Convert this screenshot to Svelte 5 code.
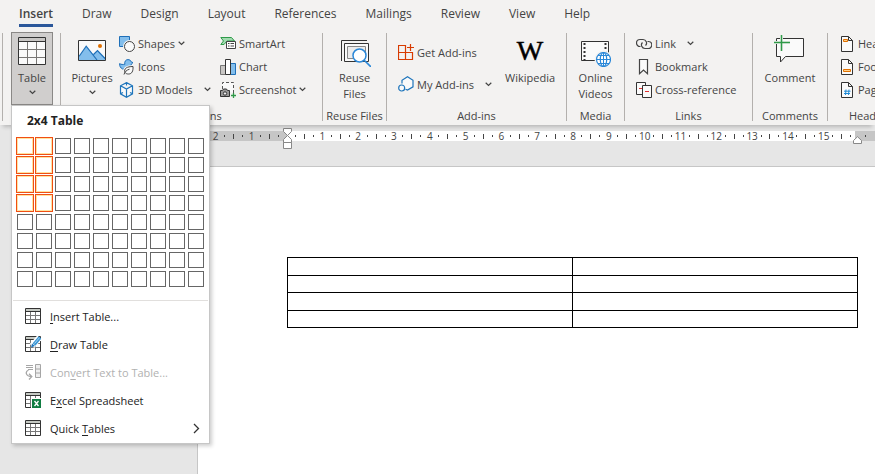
<script lang="ts">
  const tabs = ['Insert', 'Draw', 'Design', 'Layout', 'References', 'Mailings', 'Review', 'View', 'Help'];
  let activeTab = $state('Insert');

  const rows = 8;
  const cols = 10;
  let pickedCols = $state(2);
  let pickedRows = $state(4);

  const cells = Array.from({ length: rows * cols }, (_, i) => ({
    row: Math.floor(i / cols) + 1,
    col: (i % cols) + 1
  }));

  // each entry is split around its access key
  const menu = [
    { icon: 'grid', before: '', key: 'I', after: 'nsert Table...' },
    { icon: 'draw', before: '', key: 'D', after: 'raw Table' },
    { icon: 'convert', before: 'Con', key: 'v', after: 'ert Text to Table...', disabled: true },
    { icon: 'excel', before: 'E', key: 'x', after: 'cel Spreadsheet' },
    { icon: 'grid', before: 'Quick ', key: 'T', after: 'ables', submenu: true }
  ];

  // four ruler marks to a centimetre
  function mark(n: number) {
    if (n % 4 === 0) return String(n / 4);
    return n % 2 === 0 ? 'tick' : 'dot';
  }

  const leftMarks = [8, 7, 6, 5, 4, 3, 2, 1].map(mark);
  const mainMarks = Array.from({ length: 63 }, (_, i) => mark(i + 1));

  function pick(row: number, col: number) {
    pickedRows = row;
    pickedCols = col;
  }
</script>

{#snippet chevron()}
  <svg class="chevron" width="7" height="5" viewBox="0 0 7 5"><path d="M.7.8 3.5 3.5 6.3.8" fill="none" stroke="#444" stroke-width="1.2" /></svg>
{/snippet}

{#snippet small(icon: string, text: string, arrow: string)}
  <button class="small">
    <svg width="16" height="16" viewBox="0 0 16 16" fill="none" stroke="#444">
      {#if icon === 'shapes'}
        <path d="M.5.5h10v10H.5z" fill="#83beec" stroke="#1e6fb8" />
        <circle cx="10.5" cy="10.5" r="5" fill="#fafafa" stroke="#f3f2f1" stroke-width="3" />
        <circle cx="10.5" cy="10.5" r="5" fill="#fafafa" />
      {:else if icon === 'icons'}
        <path d="M.6 4.6c1.5 1 3.4 1 5.2.7C5.3 2.4 6.8.6 9 .6c1.8 0 2.9 1 3.2 2.3l1.8.7-1.6 1.4c-.4 2.2-2 3.5-4 5L3.5 10C1.5 9 .4 7 .6 4.6z" fill="#83beec" stroke="#1e6fb8" />
        <path d="M6 13.5c-1.5-4 2-6 8-6 .3 4.500-1 7.500-4.500 7.500-1.600 0-2.800-.5-3.500-1.500z" fill="#fafafa" stroke="#f3f2f1" stroke-width="3" />
        <path d="M5 15.500c.7-2.500 2.500-4.500 5.500-5.300M6 13.500c-1.500-4 2-6 8-6 .3 4.500-1 7.500-4.500 7.500-1.600 0-2.800-.5-3.500-1.500z" fill="#fafafa" />
      {:else if icon === 'cube'}
        <path d="M7.500.6 13.500 3.800v8L7.500 15.300 1.500 11.800v-8z M1.500 3.800l6 3.200 6-3.200M7.500 7v8M7.500.6v3M1.500 11.800l2.500-1.400M13.500 11.800 11 10.400" fill="#fafafa" stroke="#1e75bb" stroke-width="1.2" />
      {:else if icon === 'smartart'}
        <path d="M.8 1.500h10.700L14.500 5H7L4 8.500H.8L3.500 5z" fill="#a1dbb0" stroke="#2f9a49" />
        <path d="M6.500 5.500h9v7h-9z" fill="#fff" stroke="#444" />
        <path d="M8 7.500h1.500M10.500 7.500H14M8 10h1.500M10.500 10H14" />
      {:else if icon === 'chart'}
        <path d="M.5 6.500h5v9h-5z" fill="#c8c6c4" stroke="#777" />
        <path d="M10.500 4.500h5v11h-5z" fill="#83beec" stroke="#1e6fb8" />
        <path d="M5.500.5h5v15h-5z" fill="#fff" stroke="#333" />
      {:else if icon === 'screenshot'}
        <path d="M2.500 7V.5h11V11" fill="#fafafa" stroke="#555" stroke-dasharray="3 2" />
        <path d="M.5 8.500h2l1-1.500h3l1 1.500h2v6h-9z" fill="#999" stroke="#333" />
        <circle cx="5" cy="11.500" r="1.700" fill="#eee" stroke="#333" />
        <path d="M13.500 11v5M11 13.500h5" stroke="#2f9a49" stroke-width="1.300" />
      {:else if icon === 'get'}
        <path d="M.5 1.500h7v14h-7zM.5 8.500h14v7h-14zM12.500 0v7M9 3.500h7" stroke="#d83b01" stroke-width="1.200" />
      {:else if icon === 'my'}
        <path d="M4 7.500V4.300L9.500.8l5.500 3.500v6.500L9.500 14l-2-.7" fill="#fafafa" stroke="#1e75bb" stroke-width="1.200" />
        <circle cx="3.700" cy="12" r="3" fill="#fafafa" stroke="#1e75bb" stroke-width="1.200" />
      {:else if icon === 'link'}
        <path d="M4.500 10.500H4A3.500 3.500 0 1 1 4 3.500h3a3.500 3.500 0 0 1 2.500 6M11.500 5.500h.8a3.500 3.500 0 1 1 0 7H9A3.500 3.500 0 0 1 6.500 6.500" stroke-width="1.200" />
      {:else if icon === 'bookmark'}
        <path d="M3.500.5h8v14.200l-4-3.700-4 3.700z" fill="#fafafa" stroke-width="1.200" />
      {:else if icon === 'cross'}
        <path d="M.5.5h9v12h-9z" fill="#fafafa" stroke="#333" />
        <path d="M3 6.500h3" stroke="#e03030" />
        <path d="M6.500 3.500h9v12h-9z" fill="#fafafa" stroke="#333" />
        <path d="M9 9.500h4" stroke="#e03030" />
      {:else}
        <path d="M2.500.5h7l4 4v11h-11zM9.500.5v4h4" fill="#fafafa" stroke="#333" />
        {#if icon === 'header'}
          <path d="M4.500 3.500h4v2h-4z" fill="#ffd08a" stroke="#e07000" />
        {:else if icon === 'footer'}
          <path d="M4.500 10.500h7v2h-7z" fill="#ffd08a" stroke="#e07000" />
        {:else}
          <path d="M7 7.500 6.500 13M10 7.500 9.500 13M5 9.200h6.500M5 11.500h6" stroke="#1e8ad6" />
        {/if}
      {/if}
    </svg>
    <span>{text}</span>
    {#if arrow}
      <span class="arrow" class:split={arrow === 'split'}>{@render chevron()}</span>
    {/if}
  </button>
{/snippet}

<div class="app">
  <div class="tabs" role="tablist">
    {#each tabs as tab}
      <button role="tab" class:active={tab === activeTab} aria-selected={tab === activeTab} onclick={() => (activeTab = tab)}>{tab}</button>
    {/each}
  </div>

  <div class="ribbon">
    <section class="group edge"></section>

    <section class="group tables">
      <button class="big pressed">
        <svg width="32" height="32" viewBox="0 0 32 32" fill="none">
          <path d="M2.500 2.500h27v27h-27z" fill="#fafafa" />
          <path d="M3 3h26v3H3z" fill="#c8c6c4" />
          <path d="M11.500 7v22M20.500 7v22M3 14.500h26M3 22.500h26" stroke="#797775" />
          <path d="M2.500 2.500h27v27h-27zM3 6.500h26" stroke="#333" />
        </svg>
        <span>Table</span>
        <span>{@render chevron()}</span>
      </button>

      <div class="dropdown">
        <h2>{pickedCols}x{pickedRows} Table</h2>
        <div class="picker">
          {#each cells as cell}
            <button
              class="cell"
              class:picked={cell.row <= pickedRows && cell.col <= pickedCols}
              aria-label="{cell.col}x{cell.row} Table"
              onclick={() => pick(cell.row, cell.col)}
            ></button>
          {/each}
        </div>
        <ul>
          {#each menu as item}
            <li>
              <button disabled={item.disabled}>
                <svg width="16" height="16" viewBox="0 0 16 16" fill="none">
                  {#if item.icon === 'convert'}
                    <path d="M1 1.500h7M1 3.500h7M3 5.500h5" stroke="#a6a6a6" />
                    <path d="M3.500 6C0 7.500.5 12 6 12.500M4 9.800l2.800 2.800L4 15.500" stroke="#a6a6a6" stroke-width="1.300" />
                    <path d="M10.500.5h5v13h-5zM10.500 5h5M10.500 9h5" fill="#eee" stroke="#a6a6a6" />
                  {:else}
                    <path d="M.5.5h15v15H.5z" fill="#fff" />
                    <path d="M1 1h14v2H1z" fill="#c5c9c3" />
                    <path d="M5.500 4v11M10.500 4v11M1 7.500h14M1 11.500h14" stroke="#777" />
                    <path d="M.5.5h15v15H.5zM1 3.500h14" stroke="#333" />
                    {#if item.icon === 'draw'}
                      <path d="M7 10 14.500 1.500" stroke="#fff" stroke-width="6" />
                      <path d="M9 8.500 15 1.500" stroke="#3a96d4" stroke-width="3.500" />
                      <path d="M9.500 7.500 14.500 1.700" stroke="#a9d4f2" />
                      <path d="M6 11.500 7 7.500l3 2.500z" fill="#1e75bb" />
                    {:else if item.icon === 'excel'}
                      <path d="M6 6h10v10H6z" fill="#fff" />
                      <path d="M7 7h9v9H7z" fill="#107c41" />
                      <path d="M9.500 9l4 5M13.500 9l-4 5" stroke="#fff" stroke-width="1.300" />
                    {/if}
                  {/if}
                </svg>
                <span class="text">{item.before}<u>{item.key}</u>{item.after}</span>
                {#if item.submenu}
                  <svg width="7" height="11" viewBox="0 0 7 11"><path d="M1 1l4.500 4.500L1 10" fill="none" stroke="#333" stroke-width="1.300" /></svg>
                {/if}
              </button>
            </li>
          {/each}
        </ul>
      </div>
    </section>

    <section class="group illustrations">
      <div class="items">
        <button class="big pictures">
          <svg width="32" height="32" viewBox="0 0 32 32" fill="none">
            <path d="M2.500 5.500h27v20h-27z" fill="#fafafa" />
            <path d="M3 22l7.200-10.800 7.300 8.300 4-4 8 8V25H3z" fill="#83beec" />
            <path d="M3 21.500l7.200-10.300L21 25M17.500 19.500l4-4L29 23.500" stroke="#1e6fb8" stroke-width="1.200" />
            <circle cx="24" cy="11" r="2" fill="#e07000" />
            <path d="M2.500 5.500h27v20h-27z" stroke="#333" />
          </svg>
          <span>Pictures</span>
          <span>{@render chevron()}</span>
        </button>
        <div class="column first">
          {@render small('shapes', 'Shapes', 'menu')}
          {@render small('icons', 'Icons', '')}
          {@render small('cube', '3D Models', 'split')}
        </div>
        <div class="column">
          {@render small('smartart', 'SmartArt', '')}
          {@render small('chart', 'Chart', '')}
          {@render small('screenshot', 'Screenshot', 'menu')}
        </div>
      </div>
      <div class="label">Illustrations</div>
    </section>

    <section class="group reuse">
      <div class="items centered">
        <button class="big">
          <svg width="32" height="32" viewBox="0 0 32 32" fill="none">
            <path d="M2.500 26V5.500H28" stroke="#333" />
            <path d="M5.500 8.500h24v18h-24z" fill="#fafafa" stroke="#333" />
            <path d="M8.500 11.500h18v12h-18z" fill="#ececec" stroke="#888" />
            <circle cx="20.500" cy="20.500" r="6.500" fill="#fff" stroke="#2b88d8" stroke-width="1.500" />
            <path d="M25 25l7 7" stroke="#2b88d8" stroke-width="1.600" />
          </svg>
          <span>Reuse</span>
          <span>Files</span>
        </button>
      </div>
      <div class="label">Reuse Files</div>
    </section>

    <section class="group addins">
      <div class="items">
        <div class="column tall">
          {@render small('get', 'Get Add-ins', '')}
          {@render small('my', 'My Add-ins', 'split')}
        </div>
        <button class="big">
          <svg width="32" height="32" viewBox="0 0 32 32"><text class="wiki" x="16" y="25" text-anchor="middle">W</text></svg>
          <span>Wikipedia</span>
        </button>
      </div>
      <div class="label">Add-ins</div>
    </section>

    <section class="group media">
      <div class="items centered">
        <button class="big">
          <svg width="32" height="32" viewBox="0 0 32 32" fill="none">
            <path d="M2.500 6.500h27v19h-27z" fill="#fafafa" stroke="#333" />
            <path d="M5.500 8v17M26.500 8v17" stroke="#333" stroke-width="2" stroke-dasharray="2 2" />
            <circle cx="24.500" cy="24.500" r="9" fill="#f3f2f1" />
            <circle cx="24.500" cy="24.500" r="7" fill="#fff" stroke="#2b88d8" stroke-width="1.200" />
            <ellipse cx="24.500" cy="24.500" rx="3.200" ry="7" stroke="#2b88d8" stroke-width="1.200" />
            <path d="M24.500 17.500v14M17.500 24.500h14M19 20.500h11M19 28.500h11" stroke="#2b88d8" />
          </svg>
          <span>Online</span>
          <span>Videos</span>
        </button>
      </div>
      <div class="label">Media</div>
    </section>

    <section class="group links">
      <div class="items">
        <div class="column">
          {@render small('link', 'Link', 'split')}
          {@render small('bookmark', 'Bookmark', '')}
          {@render small('cross', 'Cross-reference', '')}
        </div>
      </div>
      <div class="label">Links</div>
    </section>

    <section class="group comments">
      <div class="items centered">
        <button class="big">
          <svg width="32" height="32" viewBox="0 0 32 32" fill="none">
            <path d="M2.500 3.500h27v18h-18L6.500 27v-5.500h-4z" fill="#fafafa" stroke="#333" />
            <path d="M7.500 0v16M0 7.500h16" stroke="#f3f2f1" stroke-width="3" />
            <path d="M7.500 0v16M0 7.500h16" stroke="#2f9a49" stroke-width="1.500" />
          </svg>
          <span>Comment</span>
        </button>
      </div>
      <div class="label">Comments</div>
    </section>

    <section class="group headers">
      <div class="items">
        <div class="column">
          {@render small('header', 'Header', 'menu')}
          {@render small('footer', 'Footer', 'menu')}
          {@render small('page', 'Page Number', 'menu')}
        </div>
      </div>
      <div class="label">Header &amp; Footer</div>
    </section>
  </div>

  <main>
    <div class="ruler">
      <div class="marks margin-left">
        {#each leftMarks as m}
          <span class={m}>{m === 'tick' || m === 'dot' ? '' : m}</span>
        {/each}
      </div>
      <div class="marks text-width">
        {#each mainMarks as m}
          <span class={m}>{m === 'tick' || m === 'dot' ? '' : m}</span>
        {/each}
        <svg class="indent start" width="9" height="22" viewBox="0 0 9 22" fill="#fff" stroke="#888">
          <path d="M.5.500h8v3L4.500 7.500l-4-4zM4.500 7.500l4 4v3h-8v-3zM.5 14.500h8v6h-8z" />
        </svg>
        <svg class="indent end" width="9" height="8" viewBox="0 0 9 8" fill="#fff" stroke="#888">
          <path d="M4.500.7l4 3.800v3h-8v-3z" />
        </svg>
      </div>
      <div class="marks margin-right"><span class="dot"></span></div>
    </div>

    <div class="page">
      <table>
        <tbody>
          {#each Array(pickedRows) as _}
            <tr>
              {#each Array(pickedCols) as _}
                <td></td>
              {/each}
            </tr>
          {/each}
        </tbody>
      </table>
    </div>
  </main>
</div>

<style>
  :global(body) {
    margin: 0;
  }

  .app {
    display: flex;
    flex-direction: column;
    min-height: 100vh;
    overflow: hidden;
    background: #e6e6e6;
    color: #444;
    font-family: 'Open Sans', 'Noto Sans', sans-serif;
    font-size: 11px;
  }

  button {
    margin: 0;
    padding: 0;
    border: none;
    background: none;
    color: inherit;
    font: inherit;
    white-space: nowrap;
  }

  svg {
    flex: none;
  }

  .tabs {
    display: flex;
    gap: 29px;
    padding: 4px 19px 5px;
    background: #f3f2f1;
    font-size: 12px;
    line-height: 20px;
  }

  .tabs button {
    border-bottom: 3px solid transparent;
  }

  .tabs .active {
    border-bottom-color: #2b579a;
    font-weight: 600;
  }

  .ribbon {
    position: relative;
    z-index: 1;
    display: flex;
    height: 93px;
    background: #f3f2f1;
    box-shadow: 0 5px 4px -3px rgba(0, 0, 0, 0.2);
  }

  .group {
    display: flex;
    flex: none;
    flex-direction: column;
    justify-content: space-between;
    box-sizing: border-box;
    margin: 1px 0 4px;
    border-right: 1px solid #b3b0ad;
  }

  .edge {
    width: 3px;
  }

  .tables {
    position: relative;
    width: 58px;
    padding-left: 8px;
  }

  .illustrations {
    width: 262px;
  }

  .reuse {
    width: 64px;
  }

  .addins {
    width: 180px;
  }

  .media {
    width: 58px;
  }

  .links {
    width: 128px;
  }

  .comments {
    width: 75px;
  }

  .headers {
    width: 128px;
  }

  .items {
    display: flex;
    margin-top: -1px;
  }

  .centered {
    justify-content: center;
  }

  .label {
    line-height: 10px;
    text-align: center;
    white-space: nowrap;
  }

  .big {
    display: flex;
    flex-direction: column;
    align-items: center;
    box-sizing: border-box;
    padding-top: 3px;
  }

  .big svg:first-child {
    margin-bottom: 3px;
  }

  .big span {
    display: flex;
    align-items: center;
    height: 16px;
    line-height: 16px;
  }

  .pressed {
    width: 42px;
    height: 73px;
    margin-top: -1px;
    padding-top: 2px;
    border: 1px solid #8a8886;
    background: #d0cecd;
  }

  .pictures {
    width: 58px;
    padding-left: 4px;
  }

  .column {
    display: flex;
    flex-direction: column;
    align-items: flex-start;
  }

  .first {
    width: 101px;
  }

  .small {
    display: flex;
    gap: 3px;
    align-items: center;
    height: 23px;
  }

  .arrow {
    display: flex;
  }

  .split {
    margin-left: 8px;
  }

  .tall {
    width: 107px;
    padding: 4px 0 0 11px;
  }

  .tall .small {
    height: 32px;
  }

  .links .column {
    padding-left: 11px;
  }

  .headers .column {
    padding-left: 11px;
  }

  .wiki {
    fill: #000;
    stroke: #000;
    stroke-width: 0.5px;
    font-family: 'Liberation Serif', serif;
    font-size: 28px;
  }

  .dropdown {
    position: absolute;
    top: 72px;
    left: 8px;
    box-sizing: border-box;
    width: 199px;
    border: 1px solid #c6c6c6;
    background: #fff;
    box-shadow: 2px 2px 4px rgba(0, 0, 0, 0.2);
    color: #222;
  }

  h2 {
    margin: 0;
    padding: 6px 15px 8px;
    font-size: 12px;
    line-height: 18px;
  }

  .picker {
    display: grid;
    grid-template-columns: repeat(10, 16px);
    gap: 3px;
    padding: 0 5px 13px;
  }

  .cell {
    width: 16px;
    height: 16px;
    border: 1px solid #666;
    background: #fff;
  }

  .picked {
    border-color: #ffe3a1;
    box-shadow: 0 0 0 1px #f04e14;
  }

  ul {
    margin: 0 1px;
    padding: 1px 0;
    border-top: 1px solid #e1dfdd;
    list-style: none;
  }

  li button {
    display: flex;
    gap: 9px;
    align-items: center;
    width: 100%;
    height: 28px;
    padding: 0 8px 0 12px;
    text-align: left;
  }

  li button:disabled {
    color: #b1b1b1;
  }

  .text {
    flex: 1;
  }

  u {
    text-underline-offset: 2px;
  }

  main {
    display: flex;
    flex: 1;
    flex-direction: column;
  }

  .ruler {
    display: flex;
    height: 10px;
    margin: 6px 0 25px;
    padding-left: 197px;
    font-size: 10px;
    line-height: 10px;
  }

  .marks {
    display: flex;
    align-items: center;
    background: #c6c6c6;
  }

  .marks span {
    display: flex;
    flex: 1 1 0;
    justify-content: center;
    width: 0;
  }

  .marks .tick::before {
    width: 1px;
    height: 5px;
    background: #444;
    content: '';
  }

  .marks .dot::before {
    width: 1px;
    height: 2px;
    background: #444;
    content: '';
  }

  .margin-left {
    flex: none;
    box-sizing: border-box;
    width: 90px;
    padding: 0 4px 0 14px;
  }

  .text-width {
    position: relative;
    flex: 1;
    padding-left: 4px;
    background: #fff;
  }

  .margin-right {
    width: 20px;
  }

  .indent {
    position: absolute;
  }

  .start {
    top: -3px;
    left: -4px;
  }

  .end {
    top: 5px;
    right: -7px;
  }

  .page {
    flex: 1;
    margin-left: 197px;
    padding: 90px 17px 90px 89px;
    border-top: 1px solid #c6c6c6;
    border-left: 1px solid #c6c6c6;
    background: #fff;
  }

  table {
    width: 100%;
    border-collapse: collapse;
    table-layout: fixed;
  }

  td {
    height: 17px;
    padding: 0;
    border: 1px solid #000;
  }

  tr:nth-child(even) td {
    height: 16px;
  }
</style>
